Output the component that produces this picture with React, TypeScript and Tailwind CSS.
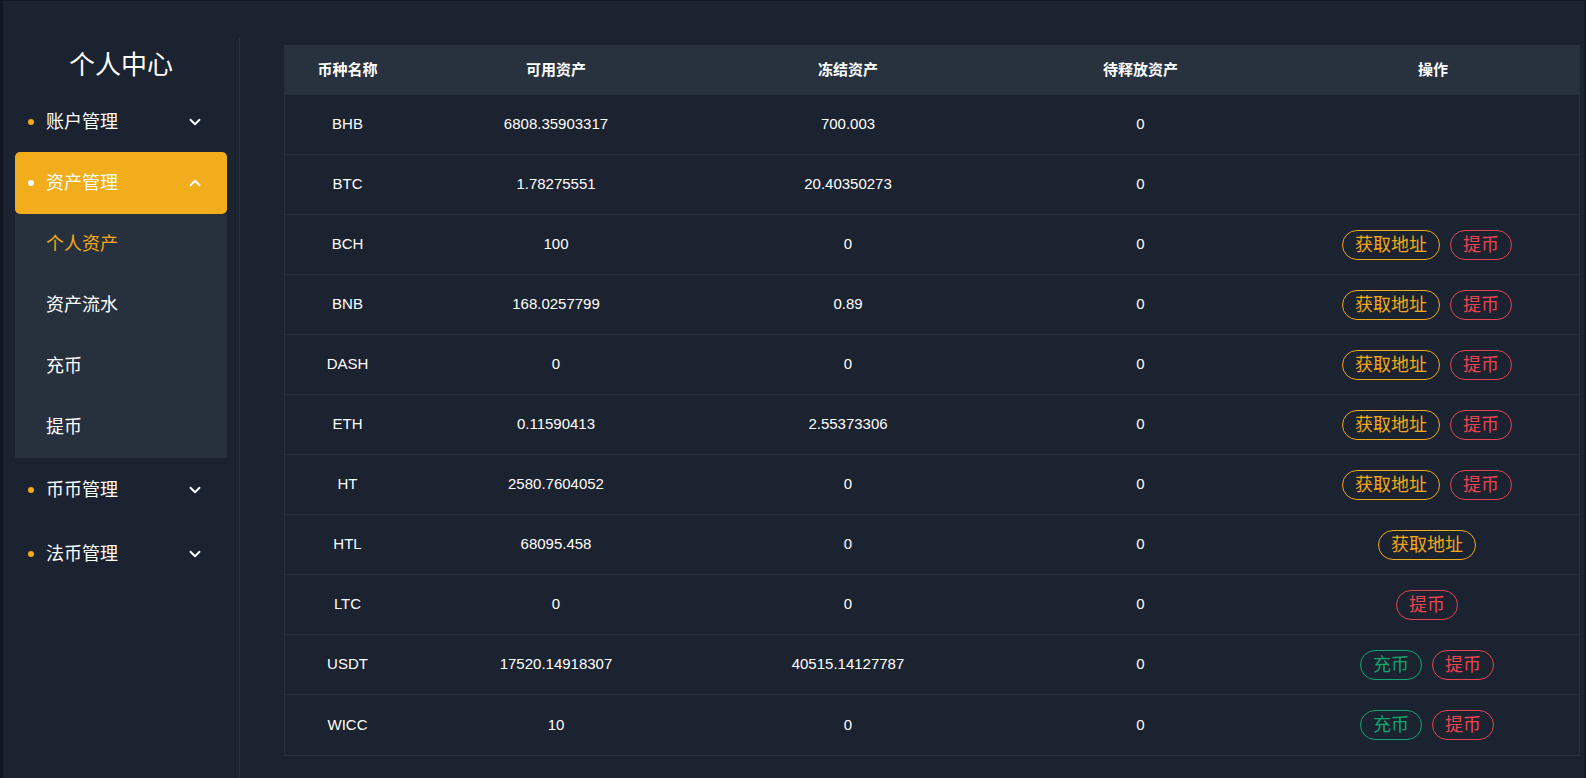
import { ChevronDown, ChevronUp } from "lucide-react";

type Action = "addr" | "withdraw" | "deposit";

const rows: { coin: string; free: string; frozen: string; pending: string; actions: Action[] }[] = [
  { coin: "BHB", free: "6808.35903317", frozen: "700.003", pending: "0", actions: [] },
  { coin: "BTC", free: "1.78275551", frozen: "20.40350273", pending: "0", actions: [] },
  { coin: "BCH", free: "100", frozen: "0", pending: "0", actions: ["addr", "withdraw"] },
  { coin: "BNB", free: "168.0257799", frozen: "0.89", pending: "0", actions: ["addr", "withdraw"] },
  { coin: "DASH", free: "0", frozen: "0", pending: "0", actions: ["addr", "withdraw"] },
  { coin: "ETH", free: "0.11590413", frozen: "2.55373306", pending: "0", actions: ["addr", "withdraw"] },
  { coin: "HT", free: "2580.7604052", frozen: "0", pending: "0", actions: ["addr", "withdraw"] },
  { coin: "HTL", free: "68095.458", frozen: "0", pending: "0", actions: ["addr"] },
  { coin: "LTC", free: "0", frozen: "0", pending: "0", actions: ["withdraw"] },
  { coin: "USDT", free: "17520.14918307", frozen: "40515.14127787", pending: "0", actions: ["deposit", "withdraw"] },
  { coin: "WICC", free: "10", frozen: "0", pending: "0", actions: ["deposit", "withdraw"] },
];

function ActionButton({ kind }: { kind: Action }) {
  if (kind === "addr")
    return (
      <button className="h-[30px] rounded-full border border-[#f0aa1a] px-3 text-[18px] leading-none text-[#f0aa1a]">
        获取地址
      </button>
    );
  if (kind === "deposit")
    return (
      <button className="h-[30px] rounded-full border border-[#13a56f] px-3 text-[18px] leading-none text-[#13a56f]">
        充币
      </button>
    );
  return (
    <button className="h-[30px] rounded-full border border-[#e5454f] px-3 text-[18px] leading-none text-[#ea4650]">
      提币
    </button>
  );
}

function MenuItem({ label, h }: { label: string; h: string }) {
  return (
    <div className={`flex items-center pr-[23px] pl-[13px] text-[18px] text-white ${h}`}>
      <span className="h-[6px] w-[6px] rounded-full bg-[#f0aa1a]" />
      <span className="ml-3 flex-1">{label}</span>
      <ChevronDown size={18} strokeWidth={2.5} />
    </div>
  );
}

export default function App() {
  return (
    <div
      className="flex h-[778px] w-full border-t border-r-2 border-l-[3px] border-t-[#151b25] border-r-[#151b25] border-l-[#111722] bg-[#1b2230]"
      style={{ fontFamily: '"Liberation Sans", "Noto Sans CJK SC", sans-serif' }}
    >
      <aside className="mt-[37px] w-[237px] shrink-0 border-r border-[#2a3341] px-3">
        <div className="flex h-[54px] items-center justify-center text-[26px] text-white">个人中心</div>
        <MenuItem label="账户管理" h="h-[60px]" />
        <div className="flex h-[62px] items-center rounded-[5px] bg-[#f1ad1b] pr-[23px] pl-[13px] text-[18px] text-white">
          <span className="h-[6px] w-[6px] rounded-full bg-white" />
          <span className="ml-3 flex-1">资产管理</span>
          <ChevronUp size={18} strokeWidth={2.5} />
        </div>
        <div className="flex flex-col bg-[#27303d] text-[18px]">
          <div className="flex h-[61px] items-center pl-[31px] text-[#f0aa1a]">个人资产</div>
          <div className="flex h-[61px] items-center pl-[31px] text-white">资产流水</div>
          <div className="flex h-[61px] items-center pl-[31px] text-white">充币</div>
          <div className="flex h-[61px] items-center pl-[31px] text-white">提币</div>
        </div>
        <MenuItem label="币币管理" h="h-[64px]" />
        <MenuItem label="法币管理" h="h-[64px]" />
      </aside>

      <main className="flex-1 pt-[44px] pr-[4px] pl-[44px]">
        <div className="border border-[#283140] text-[15px] text-white">
          <div className="grid h-[49px] grid-cols-[125px_292px_292px_293px_1fr] items-center bg-[#28313e] text-center font-bold">
            <div>币种名称</div>
            <div>可用资产</div>
            <div>冻结资产</div>
            <div>待释放资产</div>
            <div>操作</div>
          </div>
          {rows.map((r, i) => (
            <div
              key={r.coin}
              className={`grid h-[60px] grid-cols-[125px_292px_292px_293px_1fr] items-center text-center ${
                i < rows.length - 1 ? "border-b border-[#283140]" : ""
              }`}
            >
              <div>{r.coin}</div>
              <div>{r.free}</div>
              <div>{r.frozen}</div>
              <div>{r.pending}</div>
              <div className="flex items-center justify-center gap-[10px] pr-[12px]">
                {r.actions.map((a) => (
                  <ActionButton key={a} kind={a} />
                ))}
              </div>
            </div>
          ))}
        </div>
      </main>
    </div>
  );
}
